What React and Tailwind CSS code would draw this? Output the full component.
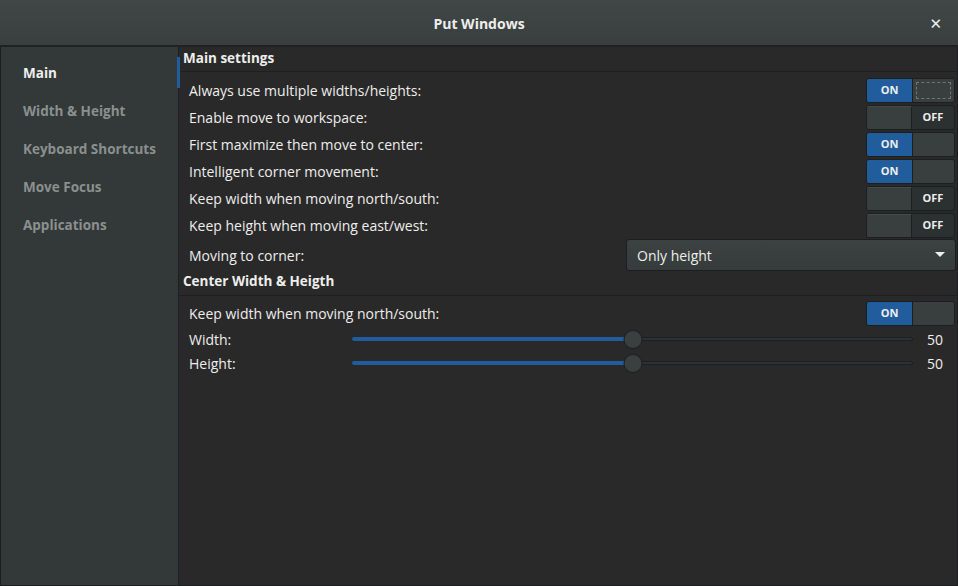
const FONT = { fontFamily: '"Open Sans", "DejaVu Sans", sans-serif' };

const NAV = ["Main", "Width & Height", "Keyboard Shortcuts", "Move Focus", "Applications"];

const MAIN_ROWS = [
  { label: "Always use multiple widths/heights:", on: true, focus: true },
  { label: "Enable move to workspace:", on: false },
  { label: "First maximize then move to center:", on: true },
  { label: "Intelligent corner movement:", on: true },
  { label: "Keep width when moving north/south:", on: false },
  { label: "Keep height when moving east/west:", on: false },
];

const Switch = ({ on, focus }) => (
  <div className="flex h-[25px] w-[89px] rounded-[3px] border border-[#1b1f1f] bg-[#2b3030] text-[11px] font-bold text-[#eeeeec] overflow-hidden">
    {on ? (
      <>
        <div className="flex w-[45px] items-center justify-center bg-[#215d9c]">ON</div>
        <div className="flex-1 border-l border-[#1b1f1f] bg-[#393f3f] p-[3px]">
          {focus && <div className="h-full w-full border border-dashed border-[#6f7574]" />}
        </div>
      </>
    ) : (
      <>
        <div className="w-[45px] border-r border-[#1b1f1f] bg-[#393f3f] border-t border-t-[#454b4a]" />
        <div className="flex flex-1 items-center justify-center">OFF</div>
      </>
    )}
  </div>
);

const Row = ({ label, on, focus }) => (
  <div className="flex h-[27px] items-center justify-between pl-[10px] pr-[2px]">
    <span className="text-[14px] text-[#eeeeec]">{label}</span>
    <Switch on={on} focus={focus} />
  </div>
);

const Header = ({ children, className = "" }) => (
  <div className={`flex items-center border-b border-[#1f1f1f] pl-[4px] text-[13.5px] font-bold text-[#eeeeec] ${className}`}>
    {children}
  </div>
);

const Slider = ({ label, value }) => {
  const pct = 50;
  return (
    <div className="flex h-[24px] items-center pl-[10px] pr-[14px]">
      <span className="w-[163px] text-[14px] text-[#eeeeec]">{label}</span>
      <div className="relative flex h-[19px] flex-1 items-center">
        <div className="h-[4px] w-full rounded-full border border-[#1b1f1f] bg-[#2d3232]" />
        <div
          className="absolute left-0 h-[4px] rounded-l-full bg-[#215d9c]"
          style={{ width: `${pct}%` }}
        />
        <div
          className="absolute h-[19px] w-[19px] -translate-x-1/2 rounded-full border border-[#1b1f1f] bg-[#3a403f]"
          style={{ left: `${pct}%` }}
        />
      </div>
      <span className="w-[30px] text-right text-[14px] text-[#eeeeec]">{value}</span>
    </div>
  );
};

export default function App() {
  return (
    <div className="flex h-[586px] w-[958px] flex-col bg-[#1c1f1f]" style={FONT}>
      <div className="relative flex h-[47px] items-center justify-center bg-gradient-to-b from-[#404746] to-[#383f3e] border-b-2 border-[#1e2221] pt-[1px]">
        <span className="text-[14px] font-bold text-[#eeeeec]">Put Windows</span>
        <span className="absolute right-[16px] top-[12px] text-[15px] font-bold text-[#eeeeec]">✕</span>
      </div>
      <div className="flex flex-1 px-[1px] pb-[1px]">
        <div className="relative w-[178px] border-r border-[#1c2020] bg-[#323938] pt-[7px]">
          {NAV.map((item, i) => (
            <div
              key={item}
              className={`flex h-[38px] items-center pl-[22px] text-[13.5px] font-bold ${
                i === 0 ? "text-[#eeeeec]" : "text-[#8b908f]"
              }`}
            >
              {item}
            </div>
          ))}
          <div className="absolute right-[-2px] top-[10px] h-[31px] w-[3px] bg-[#215d9c]" />
        </div>
        <div className="flex-1 bg-[#292929]">
          <Header className="h-[25px] pb-[2px]">Main settings</Header>
          <div className="pt-[5px]">
            {MAIN_ROWS.map((r) => (
              <Row key={r.label} {...r} />
            ))}
          </div>
          <div className="flex h-[32px] items-center justify-between pl-[10px] pr-[1px]">
            <span className="text-[14px] text-[#eeeeec]">Moving to corner:</span>
            <div className="flex h-[32px] w-[330px] items-center justify-between rounded-[3px] border border-[#1b1f1f] bg-gradient-to-b from-[#3c4241] to-[#363c3b] pl-[10px] pr-[10px]">
              <span className="text-[14px] text-[#eeeeec]">Only height</span>
              <svg width="10" height="6" viewBox="0 0 10 6">
                <path d="M0 0 L10 0 L5 5 Z" fill="#eeeeec" />
              </svg>
            </div>
          </div>
          <Header className="h-[25px] pb-[3px]">Center Width &amp; Heigth</Header>
          <div className="pt-[4px]">
            <Row label="Keep width when moving north/south:" on={true} />
          </div>
          <div>
            <Slider label="Width:" value="50" />
            <Slider label="Height:" value="50" />
          </div>
        </div>
      </div>
    </div>
  );
}
